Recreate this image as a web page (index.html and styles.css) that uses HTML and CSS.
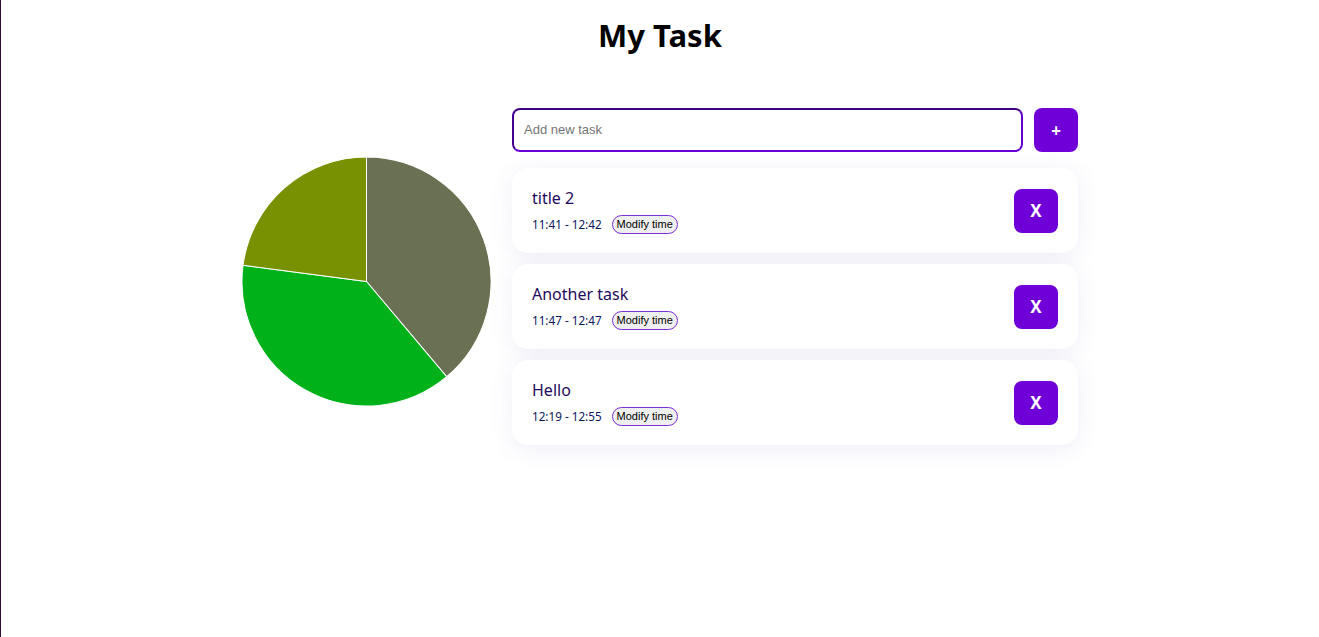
FILE: index.html
```html
<!DOCTYPE html>
<html lang="en">
<head>
<meta charset="utf-8">
<title>My Task</title>
<link rel="stylesheet" href="styles.css">
</head>
<body>
<div class="app">
  <h1 class="app-title">My Task</h1>
  <div class="content">
    <div class="chart">
      <svg width="249" height="249" viewBox="0 0 248 248">
        <path d="M124,124 L124,0 A124,124 0 0 1 203.88,218.85 Z" fill="#6a7052" stroke="#fff" stroke-width="1"/>
        <path d="M124,124 L203.88,218.85 A124,124 0 0 1 1.04,107.92 Z" fill="#00b11a" stroke="#fff" stroke-width="1"/>
        <path d="M124,124 L1.04,107.92 A124,124 0 0 1 124,0 Z" fill="#779100" stroke="#fff" stroke-width="1"/>
      </svg>
    </div>
    <div class="tasks">
      <form class="add-form">
        <input class="add-input" type="text" placeholder="Add new task">
        <button class="add-btn" type="button">+</button>
      </form>
      <ul class="task-list">
        <li class="task-card">
          <div class="task-info">
            <div class="task-title">title 2</div>
            <div class="task-meta">
              <span class="task-time">11:41 - 12:42</span>
              <button class="modify-btn" type="button">Modify time</button>
            </div>
          </div>
          <button class="delete-btn" type="button">X</button>
        </li>
        <li class="task-card">
          <div class="task-info">
            <div class="task-title">Another task</div>
            <div class="task-meta">
              <span class="task-time">11:47 - 12:47</span>
              <button class="modify-btn" type="button">Modify time</button>
            </div>
          </div>
          <button class="delete-btn" type="button">X</button>
        </li>
        <li class="task-card">
          <div class="task-info">
            <div class="task-title">Hello</div>
            <div class="task-meta">
              <span class="task-time">12:19 - 12:55</span>
              <button class="modify-btn" type="button">Modify time</button>
            </div>
          </div>
          <button class="delete-btn" type="button">X</button>
        </li>
      </ul>
    </div>
  </div>
</div>
</body>
</html>
```
FILE: styles.css
```css
html, body {
  margin: 0;
  padding: 0;
  background: #fff;
}

.app {
  min-height: 100vh;
  box-sizing: border-box;
  border-left: 1px solid #2a0f33;
  font-family: "Noto Sans", "Open Sans", sans-serif;
}

.app-title {
  margin: 0;
  padding-top: 15px;
  text-align: center;
  font-size: 31px;
  line-height: 40px;
  font-weight: 700;
  color: #000;
}

.content {
  display: flex;
  justify-content: center;
  align-items: flex-start;
  gap: 21px;
  margin-top: 53px;
}

.chart {
  margin-top: 49px;
  width: 249px;
  height: 249px;
}

.chart svg {
  display: block;
}

.tasks {
  width: 566px;
}

.add-form {
  display: flex;
  gap: 11px;
  margin: 0 0 16px;
}

.add-input {
  flex: 1;
  height: 44px;
  box-sizing: border-box;
  border: 2px solid #5a00bb;
  border-top-color: #3c0080;
  border-left-color: #44008e;
  border-bottom-color: #6a00d6;
  border-right-color: #6400cc;
  border-radius: 8px;
  padding: 0 10px 1px;
  font-family: "Liberation Sans", Arial, sans-serif;
  font-size: 13px;
  outline: none;
}

.add-input::placeholder {
  color: #757575;
}

.add-btn,
.delete-btn {
  width: 44px;
  height: 44px;
  border: none;
  border-radius: 8px;
  background: #7000d8;
  color: #fff;
  font-family: "Noto Sans", sans-serif;
  font-weight: 700;
  font-size: 17px;
  padding: 0;
  flex-shrink: 0;
}

.task-list {
  list-style: none;
  margin: 0;
  padding: 0;
  display: flex;
  flex-direction: column;
  gap: 11px;
}

.task-card {
  height: 85px;
  box-sizing: border-box;
  display: flex;
  align-items: center;
  justify-content: space-between;
  padding: 0 20px;
  background: #fff;
  border-radius: 16px;
  box-shadow: 0 4px 24px rgba(80, 60, 170, 0.09);
}

.task-title {
  font-size: 16px;
  line-height: 20px;
  color: #1f0a5c;
}

.task-meta {
  display: flex;
  align-items: center;
  gap: 10px;
  margin-top: 7px;
}

.task-time {
  font-size: 11.7px;
  color: #0c1660;
}

.modify-btn {
  font-family: "Liberation Sans", Arial, sans-serif;
  font-size: 11px;
  color: #000;
  background: #efefef;
  border: 1px solid #7a2fd8;
  border-radius: 10px;
  padding: 2px 4px;
  height: 19px;
  line-height: 13px;
}
```
